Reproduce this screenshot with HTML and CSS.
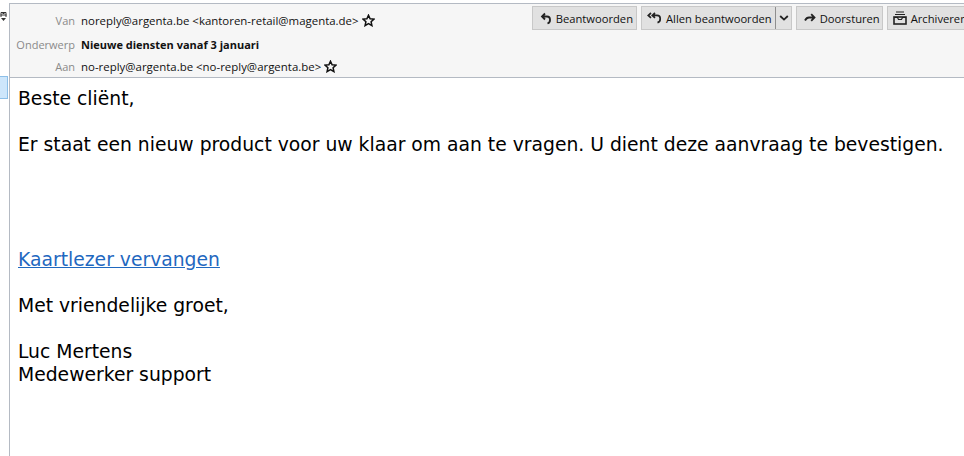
FILE: index.html
```html
<!DOCTYPE html>
<html lang="nl">
<head>
  <meta charset="UTF-8" />
  <title>Nieuwe diensten vanaf 3 januari</title>
  <link rel="stylesheet" href="styles.css">
</head>
<body>

<div class="window">
  <aside class="side">
    <svg class="side-icon" width="7" height="10" viewBox="0 0 7 10">
      <path d="M1 4V1.5h5V4M0.5 4h6M1 4v2M6 4v2M2.5 2.5h2" fill="none" stroke="#333" stroke-width="1"/>
      <path d="M1 7h5L3.5 10z" fill="#333"/>
    </svg>
    <div class="side-row"></div>
  </aside>

  <main class="message">
    <header class="head">
      <div class="fields">
        <div class="field">
          <span class="label">Van</span>
          <span>noreply@argenta.be &lt;kantoren-retail@magenta.de&gt;</span>
          <svg class="star" width="13" height="13" viewBox="0 0 13 13"><path d="M6.5 1.2l1.6 3.5 3.9.4-2.9 2.6.8 3.9-3.4-2-3.4 2 .8-3.9L1 5.1l3.9-.4z" fill="none" stroke="#111" stroke-width="1.5"/></svg>
        </div>
        <div class="field subject">
          <span class="label">Onderwerp</span>
          <strong>Nieuwe diensten vanaf 3 januari</strong>
        </div>
        <div class="field">
          <span class="label">Aan</span>
          <span>no-reply@argenta.be &lt;no-reply@argenta.be&gt;</span>
          <svg class="star" width="13" height="13" viewBox="0 0 13 13"><path d="M6.5 1.2l1.6 3.5 3.9.4-2.9 2.6.8 3.9-3.4-2-3.4 2 .8-3.9L1 5.1l3.9-.4z" fill="none" stroke="#111" stroke-width="1.5"/></svg>
        </div>
      </div>

      <div class="actions">
        <button class="btn reply">
          <svg width="12" height="13" viewBox="0 0 12 13"><path d="M5 1.5L2 4.5l3 3M2 4.5h5a3 3 0 0 1 3 3a3.8 3.8 0 0 1-2.5 4" fill="none" stroke="#222" stroke-width="1.8"/></svg>
          Beantwoorden
        </button>
        <div class="btn split">
          <span class="split-main">
            <svg width="15" height="13" viewBox="0 0 15 13"><path d="M4 1L1.3 3.4 4 5.8M8 1L5.3 3.4 8 5.8M5.3 3.4H10a3.2 3.2 0 0 1 3.2 3.2a3.8 3.8 0 0 1-2.7 4" fill="none" stroke="#222" stroke-width="1.7"/></svg>
            Allen beantwoorden
          </span>
          <span class="split-arrow">
            <svg width="10" height="6" viewBox="0 0 10 6"><path d="M1.2 1l3.8 3.6L8.8 1" fill="none" stroke="#222" stroke-width="1.8"/></svg>
          </span>
        </div>
        <button class="btn forward">
          <svg width="12" height="10" viewBox="0 0 12 10"><path d="M7.2 1.2L10.5 4.5 7.2 7.8M10.5 4.5H5Q2.5 4.5 1 7.5" fill="none" stroke="#222" stroke-width="1.8"/></svg>
          Doorsturen
        </button>
        <button class="btn archive">
          <svg width="14" height="14" viewBox="0 0 14 14"><path d="M3 1h8M2 3.5h10" fill="none" stroke="#222" stroke-width="1"/><rect x="1" y="6" width="12" height="7" fill="none" stroke="#222" stroke-width="1.6"/><path d="M1 6.5h3.5l1 2h3l1-2H13" fill="none" stroke="#222" stroke-width="1.2"/></svg>
          Archiveren
        </button>
      </div>
    </header>

    <section class="body">
      <p>Beste cliënt,</p>
      <p>Er staat een nieuw product voor uw klaar om aan te vragen. U dient deze aanvraag te bevestigen.</p>
      <p class="gap"><a href="#">Kaartlezer vervangen</a></p>
      <p>Met vriendelijke groet,</p>
      <p>Luc Mertens<br>Medewerker support</p>
    </section>
  </main>
</div>

</body>
</html>
```

FILE: styles.css
```css
html, body {
  margin: 0;
  padding: 0;
  height: 100%;
  overflow: hidden;
  background: #fff;
}
.window {
  display: flex;
  height: 456px;
  padding-top: 3px;
  box-sizing: border-box;
}
.side {
  width: 9px;
  flex: none;
  background: #fff;
  border-right: 1px solid #b4bac3;
}
.side-icon {
  display: block;
  margin: 8px 0 0 0;
}
.side-row {
  height: 23px;
  width: 8px;
  margin-top: 55px;
  background: #cde6fb;
  border: 1px solid #8cbfe8;
  border-left: 0;
  box-sizing: border-box;
}
.message {
  flex: 1;
  min-width: 0;
}
.head {
  display: flex;
  justify-content: space-between;
  height: 75px;
  box-sizing: border-box;
  background: #f6f6f6;
  border-top: 1px solid #b4bac3;
  border-bottom: 1px solid #b4bac3;
  font-family: "Open Sans", sans-serif;
  font-size: 11.45px;
  color: #111;
  overflow: hidden;
}
.fields {
  padding-top: 5px;
}
.field {
  display: flex;
  align-items: center;
  gap: 6px;
  height: 23px;
  white-space: nowrap;
}
.subject {
  margin: 1px 0 -1px;
}
.field strong {
  font-size: 11px;
  font-weight: 700;
}
.label {
  width: 65px;
  font-size: 11px;
  text-align: right;
  color: #8a8a8a;
}
.star {
  margin-left: -3px;
}
.actions {
  display: flex;
  gap: 4px;
  padding-top: 2px;
  margin-right: -7px;
  flex: none;
}
.btn {
  display: flex;
  align-items: center;
  gap: 4px;
  height: 24px;
  box-sizing: border-box;
  padding: 0 3px 0 7px;
  background: #e1e1e1;
  border: 1px solid #c8c8c8;
  font: inherit;
  font-size: 11.2px;
  color: #111;
}
.forward {
  padding-right: 2px;
}
.archive {
  padding-left: 5px;
}
.split {
  gap: 0;
  padding: 0;
}
.split-main {
  display: flex;
  align-items: center;
  gap: 4px;
  height: 100%;
  padding: 0 3px 0 5px;
  border-right: 1px solid #8e8e8e;
}
.split-arrow {
  display: flex;
  align-items: center;
  padding: 0 2px 0 3px;
}
.body {
  padding: 9px 0 0 8px;
  font-family: "DejaVu Sans", sans-serif;
  font-size: 18.75px;
  line-height: 23px;
  color: #000;
  white-space: nowrap;
}
.body p {
  margin: 0 0 23px;
}
.body .gap {
  margin-top: 92px;
}
.body a {
  color: #1f68c0;
}
```
